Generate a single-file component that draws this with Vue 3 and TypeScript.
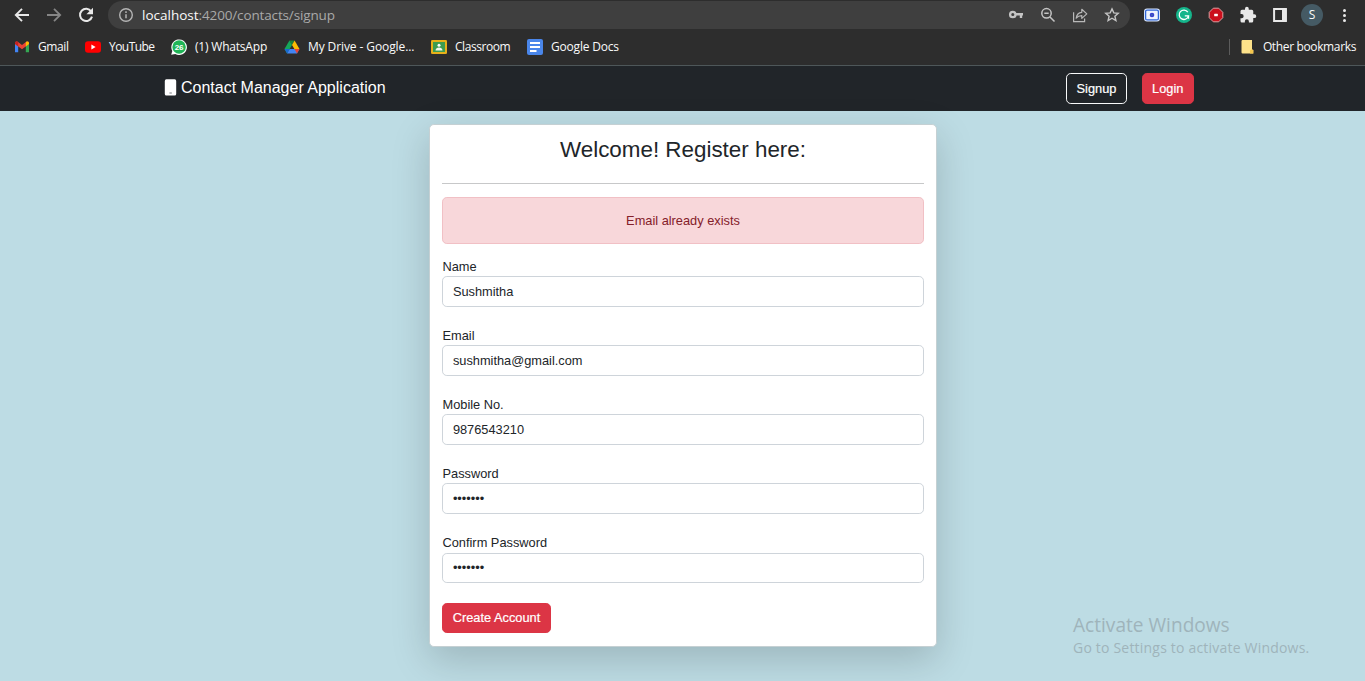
<script setup lang="ts">
import { reactive } from 'vue'

interface Bookmark { id: string; label: string; width: number }
interface Field { key: string; label: string; type: string; value: string }

const bookmarks: Bookmark[] = [
  { id: 'gmail', label: 'Gmail', width: 71 },
  { id: 'youtube', label: 'YouTube', width: 86 },
  { id: 'whatsapp', label: '(1) WhatsApp', width: 113 },
  { id: 'drive', label: 'My Drive - Google...', width: 147 },
  { id: 'classroom', label: 'Classroom', width: 96 },
  { id: 'docs', label: 'Google Docs', width: 110 },
]

const fields = reactive<Field[]>([
  { key: 'name', label: 'Name', type: 'text', value: 'Sushmitha' },
  { key: 'email', label: 'Email', type: 'text', value: 'sushmitha@gmail.com' },
  { key: 'mobile', label: 'Mobile No.', type: 'text', value: '9876543210' },
  { key: 'password', label: 'Password', type: 'password', value: 'secret1' },
  { key: 'confirm', label: 'Confirm Password', type: 'password', value: 'secret1' },
])
</script>

<template>
  <div class="window">
    <header class="chrome">
      <div class="toolbar">
        <div class="nav-icons">
          <svg width="20" height="20" viewBox="0 0 20 20" fill="none" stroke="#e8e8e8" stroke-width="1.9"><path d="M17 10H4M10 3.800 3.800 10l6.200 6.200" /></svg>
          <svg width="20" height="20" viewBox="0 0 20 20" fill="none" stroke="#858585" stroke-width="1.800"><path d="M3 10h13M10 3.800 16.200 10 10 16.200" /></svg>
          <svg width="20" height="20" viewBox="0 0 20 20"><path d="M15.200 6.500A6.100 6.100 0 1 0 16 11.600" fill="none" stroke="#e8e8e8" stroke-width="2" /><path d="M17 2.700v6.600h-6.600z" fill="#e8e8e8" /></svg>
        </div>
        <div class="omnibox">
          <svg class="info" width="16" height="16" viewBox="0 0 16 16"><circle cx="8" cy="8" r="6.300" fill="none" stroke="#b4b4b4" stroke-width="1.400" /><path d="M8 7.200v4M8 4.300v1.600" stroke="#b4b4b4" stroke-width="1.500" /></svg>
          <div class="url"><span class="host">localhost</span>:4200/contacts/signup</div>
          <div class="omni-actions">
            <svg width="16" height="16" viewBox="0 0 16 16"><circle cx="4.800" cy="7.500" r="2.700" fill="none" stroke="#c4c4c4" stroke-width="2.300" /><path d="M7.500 7.300h7.500M13 7.500v3.600" fill="none" stroke="#c4c4c4" stroke-width="2.400" /></svg>
            <svg width="16" height="16" viewBox="0 0 16 16" fill="none" stroke="#c4c4c4" stroke-width="1.500"><circle cx="6.500" cy="6.300" r="4.700" /><path d="m10 10 4.500 4.500M4.300 6.300h4.400" /></svg>
            <svg width="16" height="16" viewBox="0 0 16 16" fill="none" stroke="#b8b8b8" stroke-width="1.200"><path d="M1.600 5.300v9.300h11v-3.200" /><path d="M4.200 11.200c.5-4 2.600-5.700 5.600-5.900V2.300l5 4.600-5 4.500V8.600c-2.600 0-4.200.8-5.600 2.600z" stroke-linejoin="round" /></svg>
            <svg width="16" height="16" viewBox="0 0 16 16" fill="none" stroke="#c4c4c4" stroke-width="1.400"><path d="m8 1.900 1.800 4 4.400.4-3.300 2.900 1 4.300L8 11.200l-3.900 2.300 1-4.300-3.300-2.900 4.400-.4z" /></svg>
          </div>
        </div>
        <div class="extensions">
          <svg width="18" height="18" viewBox="0 0 18 18"><rect x="1" y="2.500" width="16" height="13" rx="3" fill="#dce9ff" /><rect x="2.600" y="4.100" width="12.800" height="9.800" rx="1.500" fill="#eef4ff" stroke="#3266d6" stroke-width="1.300" /><circle cx="9" cy="9" r="2.300" fill="#3a3fd0" /><circle cx="9" cy="9" r=".8" fill="#3f8a94" /></svg>
          <svg width="18" height="18" viewBox="0 0 18 18"><circle cx="9" cy="9" r="8" fill="#15b58b" /><path d="M12.800 6.100A4.700 4.700 0 1 0 13.500 9.800H9.800M13.500 9.800v3" fill="none" stroke="#fff" stroke-width="1.300" /></svg>
          <svg width="18" height="18" viewBox="0 0 18 18"><path d="M6.300 2.200h5.400L15.800 6.300v5.400L11.700 15.800H6.300L2.200 11.700V6.300z" fill="#cb0f1c" stroke="#dfa0a2" stroke-width="1" stroke-linejoin="round" /><rect x="7.200" y="7.800" width="3.600" height="2.400" rx=".5" fill="#fff" /></svg>
          <svg width="18" height="18" viewBox="0 0 24 24"><path fill="#e8e8e8" d="M20.500 11H19V7a2 2 0 0 0-2-2h-4V3.500a2.500 2.500 0 0 0-5 0V5H4a2 2 0 0 0-2 2v3.800h1.500a2.700 2.700 0 0 1 0 5.400H2V20a2 2 0 0 0 2 2h3.800v-1.500a2.700 2.700 0 0 1 5.400 0V22H17a2 2 0 0 0 2-2v-4h1.500a2.500 2.500 0 0 0 0-5z" /></svg>
          <svg width="18" height="18" viewBox="0 0 18 18"><path d="M3.100 3.100h11.800v11.800H3.100z" fill="none" stroke="#e8e8e8" stroke-width="2" /><path d="M11 3h4.500v12H11z" fill="#e8e8e8" /></svg>
          <span class="avatar">S</span>
          <svg width="18" height="18" viewBox="0 0 18 18" fill="#e8e8e8"><circle cx="9.500" cy="4.500" r="1.500" /><circle cx="9.500" cy="9.500" r="1.500" /><circle cx="9.500" cy="14.500" r="1.500" /></svg>
        </div>
      </div>
      <nav class="bookmarks">
        <a v-for="b in bookmarks" :key="b.id" class="bookmark" :style="{ width: b.width + 'px' }">
          <svg v-if="b.id === 'gmail'" width="16" height="16" viewBox="0 0 16 16"><path d="M1 13.200V4l3.200 2.400v6.800z" fill="#4285f4" /><path d="M15 13.200V4l-3.200 2.400v6.800z" fill="#34a853" /><path d="M1 5V4c0-1.500 1.600-2 2.700-1.200L8 6l4.300-3.200C13.400 2 15 2.500 15 4v1L8 10.200z" fill="#ea4335" /><path d="M11.800 3.200 12.300 2.800C13.400 2 15 2.500 15 4v1l-3.200 2.400z" fill="#fbbc04" /><path d="M1 4c0-1.500 1.600-2 2.700-1.200l.5.400v4.200L1 5z" fill="#c5221f" /></svg>
          <svg v-else-if="b.id === 'youtube'" width="16" height="16" viewBox="0 0 16 16"><rect y="2.300" width="16" height="11.400" rx="3" fill="#f00" /><path d="m6.400 5.600 4.200 2.400-4.200 2.400z" fill="#fff" /></svg>
          <svg v-else-if="b.id === 'whatsapp'" width="16" height="16" viewBox="0 0 16 16"><path d="M.2 15.800 1.300 12A7.800 7.800 0 1 1 4.300 15z" fill="#fff" /><circle cx="8.100" cy="8" r="6.700" fill="#20b557" /><text x="8.100" y="11" class="badge-count">26</text></svg>
          <svg v-else-if="b.id === 'drive'" width="16" height="16" viewBox="0 0 16 16"><path d="M5.400 1.500h5.200L8 6z" fill="#188038" /><path d="M5.400 1.500 8 6l-5 8.500L.5 10z" fill="#16a55a" /><path d="M10.600 1.500 15.500 10h-5.100L8 6z" fill="#fbbc04" /><path d="M5.600 10h9.900L13 14.500H3z" fill="#4285f4" /><path d="M10.400 10h5.100L13 14.500z" fill="#ea4335" /><path d="M5.600 10 3 14.500.5 10z" fill="#1967d2" /></svg>
          <svg v-else-if="b.id === 'classroom'" width="16" height="16" viewBox="0 0 16 16"><rect y="1" width="16" height="14" rx="1.300" fill="#e6b01a" /><rect x="2" y="3" width="12" height="10" fill="#3c9c50" /><circle cx="8" cy="6.200" r="1.500" fill="#fff" /><path d="M4.500 11.500c0-4 7-4 7 0z" fill="#f2f7f0" /></svg>
          <svg v-else width="16" height="16" viewBox="0 0 16 16"><rect width="16" height="16" rx="2" fill="#4a86ea" /><path d="M3 4h10M3 8h10M3 12h6.500" stroke="#fff" stroke-width="2" /></svg>
          <span :class="['label', b.id]">{{ b.label }}</span>
        </a>
        <div class="other">
          <svg width="13" height="14" viewBox="0 0 13 14"><path d="M.5 1.200Q.5 0 1.700 0H11v9.500l1.300.5v3.600H1.700Q.5 13.600.5 12.500z" fill="#fde28a" /><path d="M9 13.600v-3.300l2-.8 1.300.5v3.600z" fill="#f5c64d" /></svg>
          <span class="label other-label">Other bookmarks</span>
        </div>
      </nav>
    </header>

    <div class="navbar">
      <div class="brand">
        <svg width="13" height="17" viewBox="0 0 13 17"><rect x=".8" y=".3" width="11.400" height="16.200" rx="1.600" fill="#fff" /><rect x="5.200" y="13.300" width="2.800" height="1.400" rx=".6" fill="#a9abad" /></svg>
        <span class="brand-name">Contact Manager Application</span>
      </div>
      <div class="actions">
        <button class="btn outline">Signup</button>
        <button class="btn danger">Login</button>
      </div>
    </div>

    <main class="page">
      <form class="card" @submit.prevent>
        <h3>Welcome! Register here:</h3>
        <hr />
        <div class="alert">Email already exists</div>
        <div v-for="f in fields" :key="f.key" class="field">
          <label :for="f.key">{{ f.label }}</label>
          <input :id="f.key" v-model="f.value" :type="f.type" autocomplete="off" spellcheck="false" />
        </div>
        <button class="btn danger create">Create Account</button>
      </form>
    </main>

    <aside class="watermark">
      <div class="wm-title">Activate Windows</div>
      <div class="wm-sub">Go to Settings to activate Windows.</div>
    </aside>
  </div>
</template>

<style>
body { margin: 0; overflow: hidden; }
</style>

<style scoped>
* { box-sizing: border-box; }
svg { display: block; flex: none; }
.window {
  position: relative;
  display: flex;
  flex-direction: column;
  width: 1365px;
  height: 681px;
  overflow: hidden;
  background: #bddce4;
  font-family: "Liberation Sans", Arial, sans-serif;
  font-size: 12.8px;
  line-height: 1.5;
  color: #212529;
}
.chrome {
  flex: none;
  height: 66px;
  background: #2d2d2d;
  border-bottom: 1px solid #4e5759;
  font-family: "Open Sans", "Segoe UI", sans-serif;
  color: #fafafa;
}
.toolbar { display: flex; align-items: center; height: 30px; }
.nav-icons { display: flex; gap: 12px; width: 108px; padding-left: 12px; }
.omnibox {
  display: flex;
  align-items: center;
  width: 1022px;
  height: 28px;
  padding: 0 10px;
  border-radius: 14px;
  background: #3f3f3f;
}
.url {
  margin-left: 8px;
  font-size: 13.5px;
  line-height: 20px;
  letter-spacing: -0.14px;
  color: #a9a9a9;
  white-space: nowrap;
}
.host { letter-spacing: 0; color: #fafafa; }
.omni-actions { display: flex; gap: 16px; margin-left: auto; }
.extensions { display: flex; align-items: center; gap: 14px; padding-left: 13px; }
.avatar {
  width: 22px;
  height: 22px;
  margin: 0 -2px;
  border-radius: 50%;
  background: #455a64;
  font-size: 12px;
  line-height: 22px;
  text-align: center;
}
.bookmarks { display: flex; align-items: center; height: 34px; padding: 0 9px 0 14px; }
.bookmark { display: flex; align-items: center; gap: 8px; flex: none; }
.label { font-size: 12px; line-height: 18px; letter-spacing: -0.2px; white-space: nowrap; }
.label.gmail { letter-spacing: -0.4px; }
.label.youtube { letter-spacing: -0.55px; }
.label.classroom { letter-spacing: -0.45px; }
.label.drive { letter-spacing: -0.1px; }
.other-label { letter-spacing: -0.36px; }
.badge-count { font: bold 8px "Liberation Sans", sans-serif; fill: #fff; text-anchor: middle; }
.other {
  display: flex;
  align-items: center;
  gap: 9px;
  height: 16px;
  margin-left: auto;
  padding-left: 11px;
  border-left: 1px solid #5c5c5c;
}
.navbar {
  display: flex;
  flex: none;
  align-items: center;
  justify-content: space-between;
  height: 45px;
  padding: 0 171px 0 164px;
  background: #212529;
}
.brand {
  display: flex;
  align-items: center;
  gap: 4px;
  padding-bottom: 3px;
  font-size: 16px;
  line-height: 24px;
  color: #fff;
}
.brand-name { padding-top: 2px; }
.actions { display: flex; gap: 15px; }
.btn {
  height: 31px;
  padding: 0 9.600px;
  border: 1px solid #dc3545;
  border-radius: 4.800px;
  font: 12.8px/19px "Liberation Sans", Arial, sans-serif;
  color: #fff;
  -webkit-text-stroke: 0.2px #fff;
}
.outline { width: 61px; padding: 0 0 0 1px; border-color: #f8f9fa; background: transparent; }
.danger { background: #dc3545; }
.page { padding-top: 13px; }
.card {
  width: 508px;
  height: 523px;
  margin: 0 auto;
  padding: 12px;
  border: 1px solid #c5d0d3;
  border-radius: 4.800px;
  background: #fff;
  box-shadow: 0 12.8px 38.4px rgba(0, 0, 0, 0.175);
}
h3 {
  height: 27px;
  margin: 0 0 19px;
  padding-left: 1px;
  font-size: 22.4px;
  font-weight: 400;
  line-height: 26px;
  text-align: center;
}
hr { height: 1px; margin: 0 0 13px; border: 0; background: #c7c8c9; }
.alert {
  height: 47px;
  margin-bottom: 12.650px;
  padding-left: 1px;
  border: 1px solid #f1c0c5;
  border-radius: 4.800px;
  background: #f8d7da;
  line-height: 45px;
  color: #842029;
  text-align: center;
}
.field { height: 69.200px; }
.field label { display: block; height: 19.200px; padding-left: 1px; line-height: 19.200px; }
.field input {
  display: block;
  width: 100%;
  height: 30.800px;
  padding: 0 10.400px;
  border: 1px solid #ced4da;
  border-radius: 4.800px;
  outline: 0;
  background: #fff;
  font: 12.8px/19.200px "Liberation Sans", Arial, sans-serif;
  color: #212529;
}
.create { display: block; width: 109px; height: 30px; padding: 0 0 1px 1px; }
.watermark {
  position: absolute;
  left: 1073px;
  top: 612px;
  font-family: "Open Sans", "Segoe UI", sans-serif;
  color: #9fb4bb;
  white-space: nowrap;
}
.wm-title { font-size: 19.1px; line-height: 26px; }
.wm-sub { font-size: 14px; line-height: 20px; letter-spacing: 0.2px; }
</style>
